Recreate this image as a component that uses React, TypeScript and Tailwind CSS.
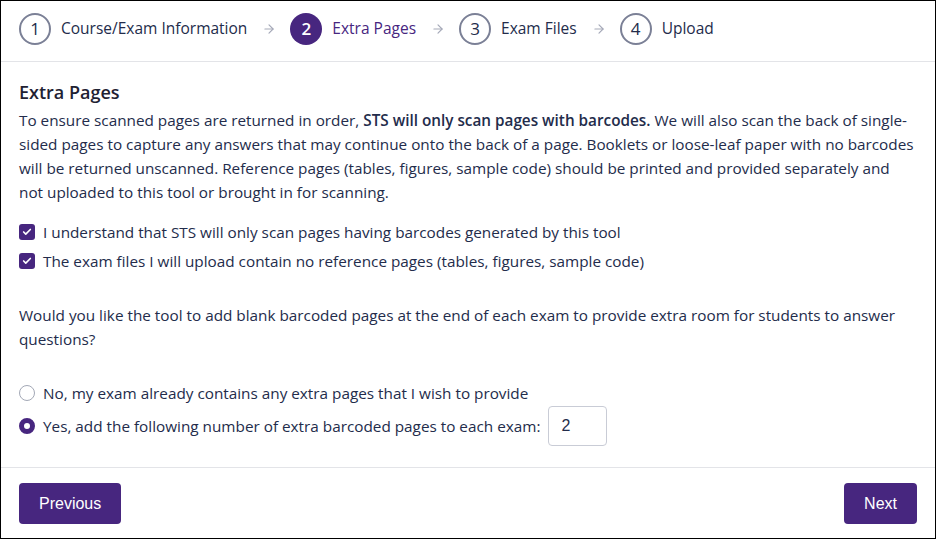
import { ArrowRight, Check } from 'lucide-react'
import { useState } from 'react'

const steps = [
  { n: 1, label: 'Course/Exam Information' },
  { n: 2, label: 'Extra Pages' },
  { n: 3, label: 'Exam Files' },
  { n: 4, label: 'Upload' },
]

const current = 2

function StepCircle({ n, active }: { n: number; active: boolean }) {
  if (active) {
    return (
      <span className="flex size-8 shrink-0 items-center justify-center rounded-full bg-[#47267f] text-[17px] font-semibold text-white">
        {n}
      </span>
    )
  }
  return (
    <span className="flex size-8 shrink-0 items-center justify-center rounded-full border-2 border-[#7b8096] text-[17px] text-[#232c4b]">
      {n}
    </span>
  )
}

function Checkbox({ checked, label }: { checked: boolean; label: string }) {
  return (
    <label className="flex items-center gap-2 leading-6">
      <span className={`flex size-4 shrink-0 items-center justify-center rounded-[3px] ${checked ? 'bg-[#47267f]' : 'border border-[#9aa0b0] bg-white'}`}>
        {checked && <Check className="size-2.5 text-white" strokeWidth={4} />}
      </span>
      <span>{label}</span>
    </label>
  )
}

function Radio({ checked }: { checked: boolean }) {
  return (
    <span
      className={`size-4 shrink-0 rounded-full bg-white ${checked ? 'border-[5px] border-[#47267f]' : 'border border-[#a3a8b6]'}`}
    />
  )
}

export default function App() {
  const [choice, setChoice] = useState<'no' | 'yes'>('yes')
  const [extra, setExtra] = useState('2')

  return (
    <div className="flex h-[539px] w-[936px] flex-col border border-black bg-white font-['Open_Sans',sans-serif] text-[15.3px] text-[#232c4b]">
      <div className="flex items-center border-b border-[#e3e4e8] px-[18px] pt-3 pb-4">
        {steps.map((s, i) => (
          <div key={s.n} className="flex items-center">
            <StepCircle n={s.n} active={s.n === current} />
            <span className={`ml-2.5 text-[15.5px] ${s.n === current ? 'text-[#47267f]' : ''}`}>{s.label}</span>
            {i < steps.length - 1 && (
              <ArrowRight className="mr-[14px] ml-[15px] size-3.5 text-[#a5a9b8]" strokeWidth={2} />
            )}
          </div>
        ))}
      </div>

      <div className="flex-1 border-b border-[#e3e4e8] px-[18px] pt-4 pb-[19px]">
        <h2 className="text-[18px] leading-7 font-semibold text-[#1f2233]">Extra Pages</h2>
        <p className="mt-0.5 leading-6">
          To ensure scanned pages are returned in order, <strong className="font-semibold">STS will only scan pages with barcodes.</strong> We
          will also scan the back of single-sided pages to capture any answers that may continue onto the back of a page. Booklets or
          loose-leaf paper with no barcodes will be returned unscanned. Reference pages (tables, figures, sample code) should be printed
          and provided separately and not uploaded to this tool or brought in for scanning.
        </p>

        <div className="mt-4 flex flex-col gap-[5px]">
          <Checkbox checked label="I understand that STS will only scan pages having barcodes generated by this tool" />
          <Checkbox checked label="The exam files I will upload contain no reference pages (tables, figures, sample code)" />
        </div>

        <p className="mt-[30px] leading-6">
          Would you like the tool to add blank barcoded pages at the end of each exam to provide extra room for students to answer
          questions?
        </p>

        <div className="mt-[30px] flex flex-col gap-px">
          <label className="flex items-center gap-2 leading-6" onClick={() => setChoice('no')}>
            <Radio checked={choice === 'no'} />
            <span>No, my exam already contains any extra pages that I wish to provide</span>
          </label>
          <label className="flex items-center gap-2" onClick={() => setChoice('yes')}>
            <Radio checked={choice === 'yes'} />
            <span>Yes, add the following number of extra barcoded pages to each exam:</span>
            <input
              value={extra}
              onChange={(e) => setExtra(e.target.value)}
              className="h-10 w-[59px] rounded-[4px] border border-[#c9ccd6] px-3 font-['Liberation_Sans',sans-serif] text-base text-[#232c4b] outline-none"
            />
          </label>
        </div>
      </div>

      <div className="flex items-center justify-between px-[18px] pt-[15px] pb-[14px]">
        <button className="h-[41px] rounded-[4px] bg-[#47267f] px-5 font-['Liberation_Sans',sans-serif] text-base text-white">
          Previous
        </button>
        <button className="h-[41px] rounded-[4px] bg-[#47267f] px-5 font-['Liberation_Sans',sans-serif] text-base text-white">
          Next
        </button>
      </div>
    </div>
  )
}
